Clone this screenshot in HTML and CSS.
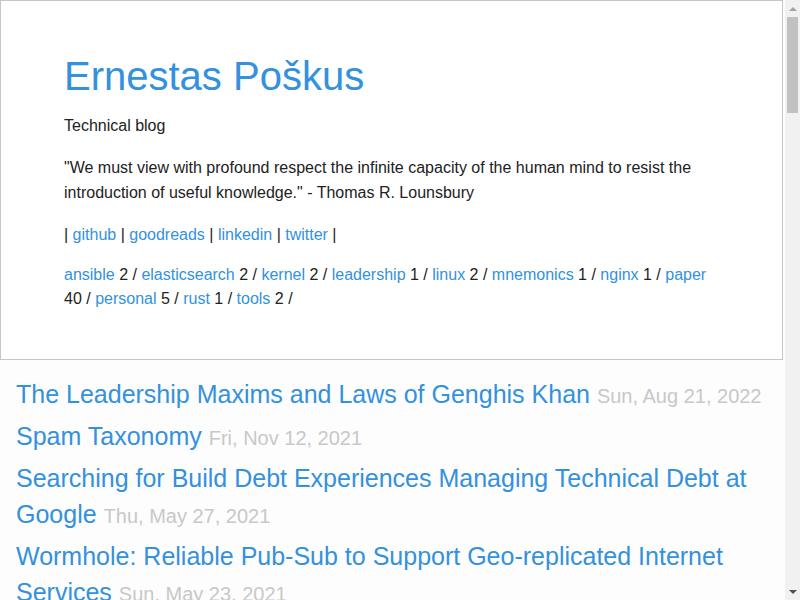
FILE: index.html
```html
<!DOCTYPE html>
<html lang="en">
<head>
<meta charset="utf-8">
<title>Ernestas Poškus</title>
<link rel="stylesheet" href="styles.css">
</head>
<body>
<header class="site-header">
  <h1 class="site-title"><a href="#">Ernestas Poškus</a></h1>
  <p class="tagline">Technical blog</p>
  <p class="quote">"We must view with profound respect the infinite capacity of the human mind to resist the introduction of useful knowledge." - Thomas R. Lounsbury</p>
  <p class="social">| <a href="#">github</a> | <a href="#">goodreads</a> | <a href="#">linkedin</a> | <a href="#">twitter</a> |</p>
  <p class="tags"><a href="#">ansible</a> 2 / <a href="#">elasticsearch</a> 2 / <a href="#">kernel</a> 2 / <a href="#">leadership</a> 1 / <a href="#">linux</a> 2 / <a href="#">mnemonics</a> 1 / <a href="#">nginx</a> 1 / <a href="#">paper</a> 40 / <a href="#">personal</a> 5 / <a href="#">rust</a> 1 / <a href="#">tools</a> 2 /</p>
</header>
<main class="posts">
  <ul class="post-list">
    <li class="post"><a href="#" class="post-link">The Leadership Maxims and Laws of Genghis Khan</a> <span class="post-date">Sun, Aug 21, 2022</span></li>
    <li class="post"><a href="#" class="post-link">Spam Taxonomy</a> <span class="post-date">Fri, Nov 12, 2021</span></li>
    <li class="post"><a href="#" class="post-link">Searching for Build Debt Experiences Managing Technical Debt at Google</a> <span class="post-date">Thu, May 27, 2021</span></li>
    <li class="post"><a href="#" class="post-link">Wormhole: Reliable Pub-Sub to Support Geo-replicated Internet Services</a> <span class="post-date">Sun, May 23, 2021</span></li>
    <li class="post"><a href="#" class="post-link">Kafka: a Distributed Messaging System for Log Processing</a> <span class="post-date">Sat, May 15, 2021</span></li>
    <li class="post"><a href="#" class="post-link">The Tail at Scale</a> <span class="post-date">Sun, May 09, 2021</span></li>
    <li class="post"><a href="#" class="post-link">Spanner: Google's Globally-Distributed Database</a> <span class="post-date">Sat, May 01, 2021</span></li>
    <li class="post"><a href="#" class="post-link">Bigtable: A Distributed Storage System for Structured Data</a> <span class="post-date">Sun, Apr 25, 2021</span></li>
    <li class="post"><a href="#" class="post-link">The Google File System</a> <span class="post-date">Sat, Apr 17, 2021</span></li>
    <li class="post"><a href="#" class="post-link">MapReduce: Simplified Data Processing on Large Clusters</a> <span class="post-date">Sun, Apr 11, 2021</span></li>
    <li class="post"><a href="#" class="post-link">Dynamo: Amazon's Highly Available Key-value Store</a> <span class="post-date">Sat, Apr 03, 2021</span></li>
    <li class="post"><a href="#" class="post-link">The Chubby Lock Service for Loosely-Coupled Distributed Systems</a> <span class="post-date">Sun, Mar 28, 2021</span></li>
    <li class="post"><a href="#" class="post-link">In Search of an Understandable Consensus Algorithm</a> <span class="post-date">Sat, Mar 20, 2021</span></li>
    <li class="post"><a href="#" class="post-link">Paxos Made Simple</a> <span class="post-date">Sun, Mar 14, 2021</span></li>
    <li class="post"><a href="#" class="post-link">Time, Clocks, and the Ordering of Events in a Distributed System</a> <span class="post-date">Sat, Mar 06, 2021</span></li>
    <li class="post"><a href="#" class="post-link">Large-scale Cluster Management at Google with Borg</a> <span class="post-date">Sun, Feb 28, 2021</span></li>
    <li class="post"><a href="#" class="post-link">Borg, Omega, and Kubernetes</a> <span class="post-date">Sat, Feb 20, 2021</span></li>
    <li class="post"><a href="#" class="post-link">Dapper, a Large-Scale Distributed Systems Tracing Infrastructure</a> <span class="post-date">Sun, Feb 14, 2021</span></li>
    <li class="post"><a href="#" class="post-link">Maglev: A Fast and Reliable Software Network Load Balancer</a> <span class="post-date">Sat, Feb 06, 2021</span></li>
    <li class="post"><a href="#" class="post-link">Scaling Memcache at Facebook</a> <span class="post-date">Sun, Jan 31, 2021</span></li>
    <li class="post"><a href="#" class="post-link">TAO: Facebook's Distributed Data Store for the Social Graph</a> <span class="post-date">Sat, Jan 23, 2021</span></li>
    <li class="post"><a href="#" class="post-link">Finding a Needle in Haystack: Facebook's Photo Storage</a> <span class="post-date">Sun, Jan 17, 2021</span></li>
    <li class="post"><a href="#" class="post-link">F4: Facebook's Warm BLOB Storage System</a> <span class="post-date">Sat, Jan 09, 2021</span></li>
    <li class="post"><a href="#" class="post-link">Gorilla: A Fast, Scalable, In-Memory Time Series Database</a> <span class="post-date">Sun, Jan 03, 2021</span></li>
    <li class="post"><a href="#" class="post-link">Zanzibar: Google's Consistent, Global Authorization System</a> <span class="post-date">Sat, Dec 26, 2020</span></li>
    <li class="post"><a href="#" class="post-link">Photon: Fault-tolerant and Scalable Joining of Continuous Data Streams</a> <span class="post-date">Sun, Dec 20, 2020</span></li>
    <li class="post"><a href="#" class="post-link">MillWheel: Fault-Tolerant Stream Processing at Internet Scale</a> <span class="post-date">Sat, Dec 12, 2020</span></li>
    <li class="post"><a href="#" class="post-link">The Dataflow Model</a> <span class="post-date">Sun, Dec 06, 2020</span></li>
    <li class="post"><a href="#" class="post-link">Dremel: Interactive Analysis of Web-Scale Datasets</a> <span class="post-date">Sat, Nov 28, 2020</span></li>
    <li class="post"><a href="#" class="post-link">Megastore: Providing Scalable, Highly Available Storage</a> <span class="post-date">Sun, Nov 22, 2020</span></li>
    <li class="post"><a href="#" class="post-link">Chord: A Scalable Peer-to-peer Lookup Service</a> <span class="post-date">Sat, Nov 14, 2020</span></li>
    <li class="post"><a href="#" class="post-link">Cassandra: A Decentralized Structured Storage System</a> <span class="post-date">Sun, Nov 08, 2020</span></li>
    <li class="post"><a href="#" class="post-link">ZooKeeper: Wait-free Coordination for Internet-scale Systems</a> <span class="post-date">Sat, Oct 31, 2020</span></li>
    <li class="post"><a href="#" class="post-link">The Log-Structured Merge-Tree</a> <span class="post-date">Sun, Oct 25, 2020</span></li>
    <li class="post"><a href="#" class="post-link">Consistent Hashing and Random Trees</a> <span class="post-date">Sat, Oct 17, 2020</span></li>
    <li class="post"><a href="#" class="post-link">Impossibility of Distributed Consensus with One Faulty Process</a> <span class="post-date">Sun, Oct 11, 2020</span></li>
    <li class="post"><a href="#" class="post-link">End-to-End Arguments in System Design</a> <span class="post-date">Sat, Oct 03, 2020</span></li>
    <li class="post"><a href="#" class="post-link">On Designing and Deploying Internet-Scale Services</a> <span class="post-date">Sun, Sep 27, 2020</span></li>
    <li class="post"><a href="#" class="post-link">Hints for Computer System Design</a> <span class="post-date">Sat, Sep 19, 2020</span></li>
    <li class="post"><a href="#" class="post-link">How Complex Systems Fail</a> <span class="post-date">Sun, Sep 13, 2020</span></li>
    <li class="post"><a href="#" class="post-link">Linux Kernel Tuning for Network Heavy Workloads</a> <span class="post-date">Sat, Sep 05, 2020</span></li>
    <li class="post"><a href="#" class="post-link">Linux Kernel Memory Management Notes</a> <span class="post-date">Sun, Aug 30, 2020</span></li>
    <li class="post"><a href="#" class="post-link">Mnemonics for Engineers</a> <span class="post-date">Sat, Aug 22, 2020</span></li>
    <li class="post"><a href="#" class="post-link">Nginx Configuration Notes</a> <span class="post-date">Sun, Aug 16, 2020</span></li>
    <li class="post"><a href="#" class="post-link">Learning Rust</a> <span class="post-date">Sat, Aug 08, 2020</span></li>
    <li class="post"><a href="#" class="post-link">Elasticsearch Cluster Tuning</a> <span class="post-date">Sun, Aug 02, 2020</span></li>
    <li class="post"><a href="#" class="post-link">Elasticsearch Index Management</a> <span class="post-date">Sat, Jul 25, 2020</span></li>
    <li class="post"><a href="#" class="post-link">Ansible Roles and Playbooks</a> <span class="post-date">Sun, Jul 19, 2020</span></li>
    <li class="post"><a href="#" class="post-link">Ansible Dynamic Inventory</a> <span class="post-date">Sat, Jul 11, 2020</span></li>
    <li class="post"><a href="#" class="post-link">Linux Command Line Tools</a> <span class="post-date">Sun, Jul 05, 2020</span></li>
    <li class="post"><a href="#" class="post-link">Tools I Use</a> <span class="post-date">Sat, Jun 27, 2020</span></li>
    <li class="post"><a href="#" class="post-link">Reading List</a> <span class="post-date">Sun, Jun 21, 2020</span></li>
    <li class="post"><a href="#" class="post-link">Personal Notes</a> <span class="post-date">Sat, Jun 13, 2020</span></li>
    <li class="post"><a href="#" class="post-link">Hello World</a> <span class="post-date">Sun, Jun 07, 2020</span></li>
  </ul>
</main>
<div class="scrollbar" aria-hidden="true">
  <div class="scroll-arrow scroll-up"></div>
  <div class="scroll-track"><div class="scroll-thumb"></div></div>
  <div class="scroll-arrow scroll-down"></div>
</div>
</body>
</html>
```

FILE: styles.css
```css
html {
  background: #fdfdfd;
}

body {
  margin: 0 15px 0 0;
  font-family: "Liberation Sans", Arial, sans-serif;
  font-size: 16px;
  line-height: 24px;
  color: #222;
  background: #fdfdfd;
}

a {
  color: #3391dd;
  text-decoration: none;
}

.site-header {
  background: #fff;
  border: 1px solid #c6c6c6;
  margin-right: 2px;
  padding: 51px 63px 48px;
}

.site-title {
  margin: 0 0 14px;
  font-size: 40px;
  line-height: 48px;
  font-weight: normal;
}

.site-header p {
  margin: 0 0 17px;
}

.site-header .quote {
  line-height: 25px;
  margin-bottom: 18px;
}

.site-header .social {
  margin-bottom: 16px;
}

.site-header .tags {
  margin-bottom: 0;
  line-height: 24px;
}

.posts {
  padding: 16px 16px 8px;
}

.post-list {
  list-style: none;
  margin: 0;
  padding: 0;
}

.post {
  font-size: 25px;
  line-height: 36px;
  margin-bottom: 6px;
}

.post-date {
  font-size: 20px;
  line-height: 20px;
  color: #c8c8c8;
}

/* browser scrollbar as seen in the screenshot */
.scrollbar {
  position: fixed;
  top: 0;
  right: 0;
  width: 15px;
  height: 100%;
  background: #f1f1f1;
  display: flex;
  flex-direction: column;
}

.scroll-arrow {
  height: 17px;
  display: flex;
  align-items: center;
  justify-content: center;
}

.scroll-arrow::before {
  content: "";
  border-left: 4px solid transparent;
  border-right: 4px solid transparent;
}

.scroll-up::before {
  border-bottom: 4px solid #a3a3a3;
}

.scroll-down::before {
  border-top: 4px solid #505050;
}

.scroll-track {
  flex: 1;
  padding: 0 2px;
}

.scroll-thumb {
  height: 96px;
  background: #c1c1c1;
}
```
